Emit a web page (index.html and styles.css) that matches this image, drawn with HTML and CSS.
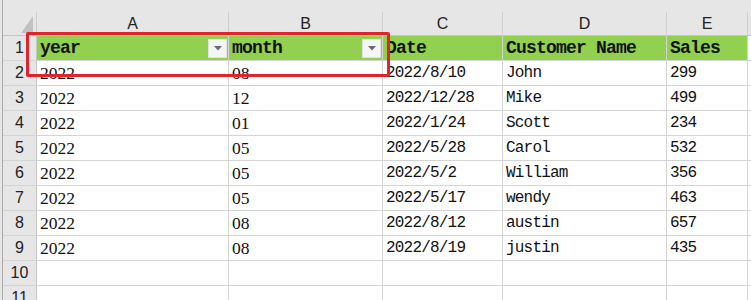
FILE: index.html
```html
<!DOCTYPE html>
<html>
<head>
<meta charset="utf-8">
<link rel="stylesheet" href="styles.css">
</head>
<body>
<div class="topbar"></div>
<div class="sheet">
  <div class="grid">
    <div class="h corner"><svg class="tri" width="13" height="17" viewBox="0 0 13 17"><polygon points="12,0 12,17 0,17" fill="#c2c2c2"/></svg></div>
    <div class="h">A</div><div class="h">B</div><div class="h">C</div><div class="h">D</div><div class="h">E</div><div class="h fill"></div>

    <div class="r">1</div>
    <div class="c hd"><span>year</span><span class="fb"><svg width="8" height="5" viewBox="0 0 8 5"><polygon points="0,0 8,0 4,4.5" fill="#6b6b6b"/></svg></span></div>
    <div class="c hd"><span>month</span><span class="fb"><svg width="8" height="5" viewBox="0 0 8 5"><polygon points="0,0 8,0 4,4.5" fill="#6b6b6b"/></svg></span></div>
    <div class="c hd">Date</div><div class="c hd">Customer Name</div><div class="c hd">Sales</div><div class="c fill"></div>

    <div class="r">2</div><div class="c s">2022</div><div class="c s">08</div><div class="c m">2022/8/10</div><div class="c m">John</div><div class="c m">299</div><div class="c fill"></div>
    <div class="r">3</div><div class="c s">2022</div><div class="c s">12</div><div class="c m">2022/12/28</div><div class="c m">Mike</div><div class="c m">499</div><div class="c fill"></div>
    <div class="r">4</div><div class="c s">2022</div><div class="c s">01</div><div class="c m">2022/1/24</div><div class="c m">Scott</div><div class="c m">234</div><div class="c fill"></div>
    <div class="r">5</div><div class="c s">2022</div><div class="c s">05</div><div class="c m">2022/5/28</div><div class="c m">Carol</div><div class="c m">532</div><div class="c fill"></div>
    <div class="r">6</div><div class="c s">2022</div><div class="c s">05</div><div class="c m">2022/5/2</div><div class="c m">William</div><div class="c m">356</div><div class="c fill"></div>
    <div class="r">7</div><div class="c s">2022</div><div class="c s">05</div><div class="c m">2022/5/17</div><div class="c m">wendy</div><div class="c m">463</div><div class="c fill"></div>
    <div class="r">8</div><div class="c s">2022</div><div class="c s">08</div><div class="c m">2022/8/12</div><div class="c m">austin</div><div class="c m">657</div><div class="c fill"></div>
    <div class="r">9</div><div class="c s">2022</div><div class="c s">08</div><div class="c m">2022/8/19</div><div class="c m">justin</div><div class="c m">435</div><div class="c fill"></div>
    <div class="r">10</div><div class="c"></div><div class="c"></div><div class="c"></div><div class="c"></div><div class="c"></div><div class="c fill"></div>
    <div class="r">11</div><div class="c"></div><div class="c"></div><div class="c"></div><div class="c"></div><div class="c"></div><div class="c fill"></div>
  </div>
  <div class="highlight"></div>
</div>
</body>
</html>
```

FILE: styles.css
```css
html, body {
  margin: 0;
  padding: 0;
  background: #e6e6e6;
  overflow: hidden;
  height: 300px;
}
.topbar {
  height: 12px;
  margin-left: 2px;
  border-left: 1px solid #a8a8a8;
  background: #e6e6e6;
}
.sheet {
  position: relative;
  margin-left: 2px;
  border-left: 1px solid #a8a8a8;
  background: #ffffff;
}
.grid {
  display: grid;
  grid-template-columns: 34px 192px 154px 120px 164px 81px 1fr;
  grid-template-rows: 24px;
  grid-auto-rows: 25px;
}
.grid > div {
  box-sizing: border-box;
  white-space: nowrap;
  overflow: hidden;
}
.h {
  background: #e6e6e6;
  border-right: 1px solid #cfcfcf;
  border-bottom: 1px solid #c4c4c4;
  font-family: "Liberation Sans", Arial, sans-serif;
  font-size: 16px;
  color: #222;
  text-align: center;
  line-height: 23px;
}
.h.fill {
  border-right: none;
}
.corner {
  display: flex;
  justify-content: flex-end;
  align-items: flex-end;
  padding: 0 2px 2px 0;
}
.r {
  background: #e6e6e6;
  border-right: 1px solid #c4c4c4;
  border-bottom: 1px solid #d4d4d4;
  font-family: "Liberation Sans", Arial, sans-serif;
  font-size: 16px;
  color: #222;
  text-align: center;
  line-height: 24px;
}
.c {
  border-right: 1px solid #d4d4d4;
  border-bottom: 1px solid #d4d4d4;
  padding-left: 3px;
  line-height: 24px;
  color: #111;
}
.c.fill {
  border-right: none;
}
.hd {
  background: #92d050;
  font-family: "Liberation Mono", "Courier New", monospace;
  font-weight: bold;
  font-size: 18px;
  letter-spacing: -0.8px;
  display: flex;
  align-items: center;
  justify-content: space-between;
  padding-right: 1px;
}
.fb {
  width: 19px;
  height: 19px;
  box-sizing: border-box;
  background: #f5f5f5;
  border: 1px solid #e2e2e2;
  display: flex;
  align-items: center;
  justify-content: center;
  letter-spacing: 0;
}
.s {
  font-family: "Liberation Serif", "Times New Roman", serif;
  font-size: 17.5px;
}
.m {
  font-family: "Liberation Mono", "Courier New", monospace;
  font-size: 16px;
  letter-spacing: -0.8px;
}
.highlight {
  position: absolute;
  left: 23px;
  top: 20px;
  width: 364px;
  height: 45px;
  box-sizing: border-box;
  border: 3px solid #e3232c;
  border-radius: 2px;
}
```
